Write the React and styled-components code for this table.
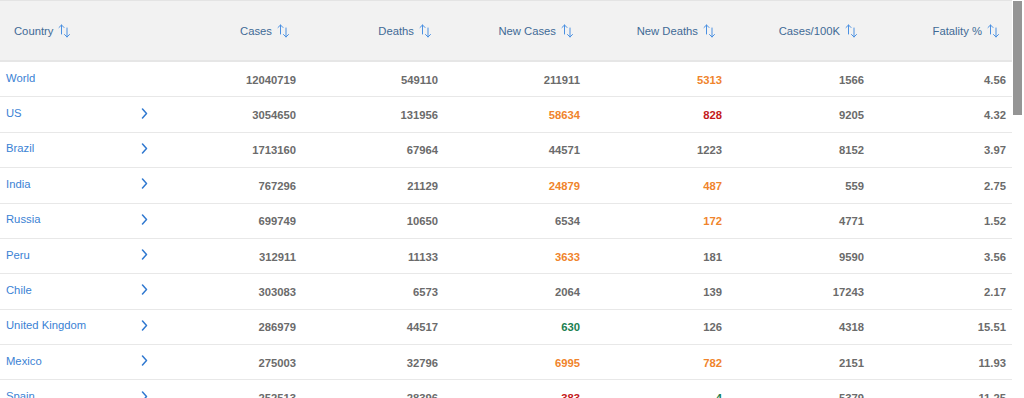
import React from 'react';
import styled, { createGlobalStyle } from 'styled-components';

const GlobalStyle = createGlobalStyle`
html, body {
  margin: 0;
  padding: 0;
  background: #ffffff;
  font-family: "Liberation Sans", Arial, sans-serif;
}
`;

const Page = styled.div`
width: 1024px;
height: 398px;
display: flex;
overflow: hidden;
background: #ffffff;`;

const Viewport = styled.div`
flex: 1;
height: 100%;
overflow: hidden;`;

const ScrollTrack = styled.div`
width: 12px;
height: 100%;
box-sizing: border-box;
padding: 1px 2px 0 1px;
background: #ffffff;`;

const ScrollThumb = styled.div`
height: 114px;
background: #959595;`;

const Table = styled.div`
width: 1012px;
display: flex;
flex-direction: column;`;

const HeaderRow = styled.div`
display: grid;
grid-template-columns: 160px repeat(6, 142px);
height: 62px;
box-sizing: border-box;
background: #f2f2f2;
border-top: 1px solid #e4e4e4;
border-bottom: 2px solid #e6e6e6;`;

const HeaderCell = styled.div`
display: flex;
align-items: center;
justify-content: ${p => (p.$left ? 'flex-start' : 'flex-end')};
gap: 4px;
padding: 0 ${p => (p.$left ? '0' : '12px')} 0 ${p => (p.$left ? '14px' : '0')};
font-size: 11.25px;
color: #3f6a96;`;

const Row = styled.div`
display: grid;
grid-template-columns: 160px repeat(6, 142px);
height: 35.375px;
box-sizing: border-box;
border-bottom: 1px solid #e8e8e8;`;

const NameCell = styled.div`
display: flex;
align-items: center;
justify-content: space-between;
padding: 0 12px 3px 6px;`;

const CountryLink = styled.span`
font-size: 11.25px;
color: #3b82d4;`;

const NumCell = styled.div`
display: flex;
align-items: center;
justify-content: flex-end;
padding: 1px 6px 0 0;
font-size: 11.25px;
font-weight: bold;
color: ${p => p.$color || '#6b6b6b'};`;

const COLORS = { o: '#f0842c', r: '#c41a1a', g: '#1a8050' };

function SortIcon() {
  return (
    <svg width="14" height="14" viewBox="0 0 14 14" fill="none" stroke="#4a90e2" strokeWidth="1" strokeLinecap="round" strokeLinejoin="round">
      <path d="M4.5 10V1M2 3.5L4.5 1 7 3.5" />
      <path d="M10 4v9M7.5 10.5L10 13l2.5-2.5" />
    </svg>
  );
}

function Chevron() {
  return (
    <svg width="7" height="11" viewBox="0 0 7 11" fill="none" stroke="#2f78d0" strokeWidth="1.5" strokeLinecap="round" strokeLinejoin="round">
      <path d="M1.5 1L5.5 5.5 1.5 10" />
    </svg>
  );
}

const columns = ['Cases', 'Deaths', 'New Cases', 'New Deaths', 'Cases/100K', 'Fatality %'];

// [name, cases, deaths, newCases, newDeaths, per100k, fatality, colour of new cases, colour of new deaths]
const rows = [
  ['World', 12040719, 549110, 211911, 5313, 1566, '4.56', '', 'o'],
  ['US', 3054650, 131956, 58634, 828, 9205, '4.32', 'o', 'r'],
  ['Brazil', 1713160, 67964, 44571, 1223, 8152, '3.97', '', ''],
  ['India', 767296, 21129, 24879, 487, 559, '2.75', 'o', 'o'],
  ['Russia', 699749, 10650, 6534, 172, 4771, '1.52', '', 'o'],
  ['Peru', 312911, 11133, 3633, 181, 9590, '3.56', 'o', ''],
  ['Chile', 303083, 6573, 2064, 139, 17243, '2.17', '', ''],
  ['United Kingdom', 286979, 44517, 630, 126, 4318, '15.51', 'g', ''],
  ['Mexico', 275003, 32796, 6995, 782, 2151, '11.93', 'o', 'o'],
  ['Spain', 252513, 28396, 383, 4, 5379, '11.25', 'r', 'g'],
];

export default function App() {
  return (
    <Page>
      <GlobalStyle />
      <Viewport>
        <Table>
          <HeaderRow>
            <HeaderCell $left>Country <SortIcon /></HeaderCell>
            {columns.map(c => (
              <HeaderCell key={c}>{c} <SortIcon /></HeaderCell>
            ))}
          </HeaderRow>
          {rows.map((r, i) => (
            <Row key={r[0]}>
              <NameCell>
                <CountryLink>{r[0]}</CountryLink>
                {i > 0 && <Chevron />}
              </NameCell>
              <NumCell>{r[1]}</NumCell>
              <NumCell>{r[2]}</NumCell>
              <NumCell $color={COLORS[r[7]]}>{r[3]}</NumCell>
              <NumCell $color={COLORS[r[8]]}>{r[4]}</NumCell>
              <NumCell>{r[5]}</NumCell>
              <NumCell>{r[6]}</NumCell>
            </Row>
          ))}
        </Table>
      </Viewport>
      <ScrollTrack>
        <ScrollThumb />
      </ScrollTrack>
    </Page>
  );
}
